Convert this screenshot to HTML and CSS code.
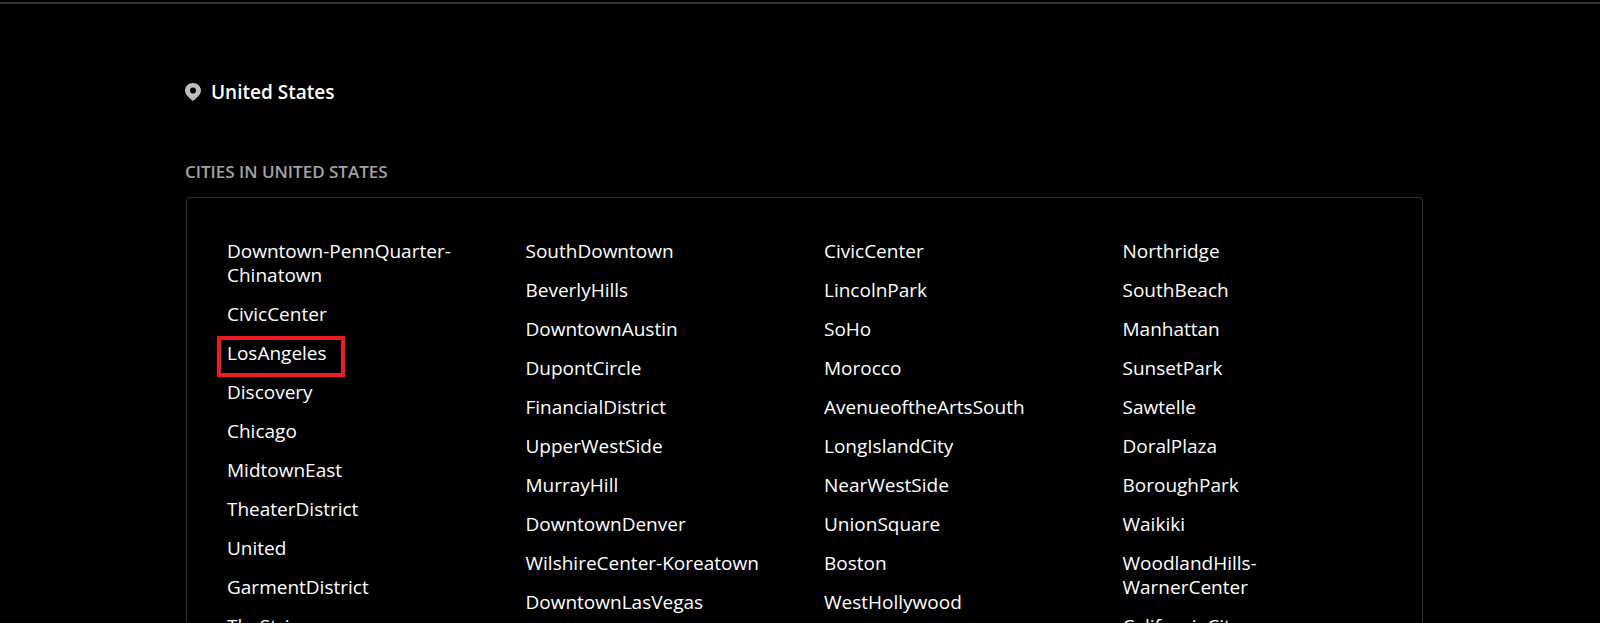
FILE: index.html
```html
<!DOCTYPE html>
<html lang="en">

<head>
    <meta charset="UTF-8" />
    <title>Cities in United States</title>
    <link rel="stylesheet" href="styles.css">
</head>

<body>
    <div class="top-line"></div>
    <div class="container">
        <div class="country">
            <svg class="pin" viewBox="0 0 16 18" width="16" height="18">
                <path fill-rule="evenodd" d="M8 0c4.400 0 8 3.400 8 7.600 0 4-4.500 7.900-8 10.400-3.500-2.500-8-6.400-8-10.400C0 3.400 3.600 0 8 0zm0 4.500a3 3 0 1 0 0 6 3 3 0 0 0 0-6z" />
            </svg>
            <span>United States</span>
        </div>
        <h2 class="label">CITIES IN UNITED STATES</h2>
        <div class="card">
            <ul class="col">
                <li>Downtown-PennQuarter-Chinatown</li>
                <li>CivicCenter</li>
                <li class="marked">LosAngeles</li>
                <li>Discovery</li>
                <li>Chicago</li>
                <li>MidtownEast</li>
                <li>TheaterDistrict</li>
                <li>United</li>
                <li>GarmentDistrict</li>
                <li>TheStrip</li>
            </ul>
            <ul class="col">
                <li>SouthDowntown</li>
                <li>BeverlyHills</li>
                <li>DowntownAustin</li>
                <li>DupontCircle</li>
                <li>FinancialDistrict</li>
                <li>UpperWestSide</li>
                <li>MurrayHill</li>
                <li>DowntownDenver</li>
                <li>WilshireCenter-Koreatown</li>
                <li>DowntownLasVegas</li>
            </ul>
            <ul class="col">
                <li>CivicCenter</li>
                <li>LincolnPark</li>
                <li>SoHo</li>
                <li>Morocco</li>
                <li>AvenueoftheArtsSouth</li>
                <li>LongIslandCity</li>
                <li>NearWestSide</li>
                <li>UnionSquare</li>
                <li>Boston</li>
                <li>WestHollywood</li>
            </ul>
            <ul class="col">
                <li>Northridge</li>
                <li>SouthBeach</li>
                <li>Manhattan</li>
                <li>SunsetPark</li>
                <li>Sawtelle</li>
                <li>DoralPlaza</li>
                <li>BoroughPark</li>
                <li>Waikiki</li>
                <li>WoodlandHills-WarnerCenter</li>
                <li>CaliforniaCity</li>
            </ul>
        </div>
    </div>
</body>

</html>
```
FILE: styles.css
```css
html,
body {
    height: 623px;
    margin: 0;
    overflow: hidden;
}

body {
    background-color: #000;
    color: #fff;
    font-family: "Open Sans", "Noto Sans", sans-serif;
}

.top-line {
    height: 2px;
    margin-top: 2px;
    background-color: #333;
}

.container {
    width: 1237px;
    margin-left: 186px;
}

.country {
    display: flex;
    align-items: center;
    gap: 10px;
    height: 24px;
    margin-top: 76px;
    margin-left: -1px;
    font-size: 19px;
    font-weight: 600;
}

.pin {
    fill: #bdbdbd;
}

.label {
    margin: 57px 0 0 -1px;
    font-size: 17px;
    line-height: 22px;
    font-weight: 600;
    color: #a3a3a3;
}

.card {
    display: grid;
    grid-template-columns: repeat(4, 298.5px);
    margin-top: 14px;
    padding: 41px 0 0 40px;
    border: 1px solid #333;
    border-radius: 4px;
}

.col {
    margin: 0;
    padding: 0;
    list-style: none;
}

.col li {
    position: relative;
    width: 240px;
    margin-bottom: 15px;
    font-size: 19px;
    line-height: 24px;
}

.marked::after {
    content: "";
    position: absolute;
    top: -5px;
    bottom: -12px;
    left: -10px;
    width: 128px;
    box-sizing: border-box;
    border: 4px solid #ed1c24;
}
```
